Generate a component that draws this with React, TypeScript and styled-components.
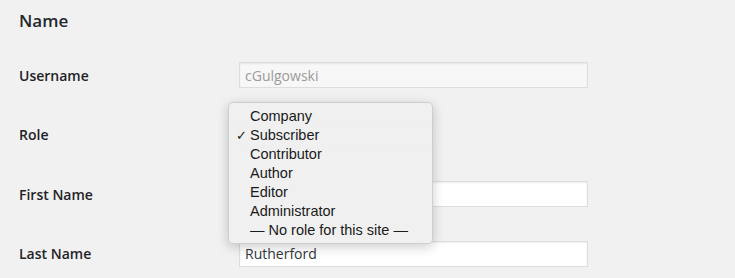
import React from "react";
import styled, { createGlobalStyle } from "styled-components";

const Global = createGlobalStyle`
  html, body { margin: 0; padding: 0; background: #f1f1f1; }
  * { box-sizing: border-box; }
`;

const Page = styled.div`
  width: 735px;
  height: 278px;
  overflow: hidden;
  background: #f1f1f1;
  padding-left: 19px;
  font-family: "Open Sans", "Liberation Sans", sans-serif;
  color: #23282d;
`;

const Heading = styled.h2`
  margin: 0;
  height: 45.5px;
  padding-top: 10px;
  font-size: 17px;
  line-height: 22px;
  font-weight: 600;
  color: #23282d;
`;

const Row = styled.div`
  display: grid;
  grid-template-columns: 220px 1fr;
  align-items: center;
  height: 59.5px;
`;

const Label = styled.label`
  font-size: 14px;
  font-weight: 600;
  color: #1f2328;
`;

const Input = styled.input<{ $disabled?: boolean }>`
  width: 349px;
  height: 26px;
  padding: 0 5px;
  border: 1px solid #ddd;
  box-shadow: inset 0 1px 2px rgba(0, 0, 0, 0.07);
  background: ${(p) => (p.$disabled ? "#f7f7f7" : "#fff")};
  color: ${(p) => (p.$disabled ? "#9a9a9a" : "#32373c")};
  font-family: "Open Sans", "Liberation Sans", sans-serif;
  font-size: 14px;
  outline: none;
`;

const SelectWrap = styled.div`
  position: relative;
  width: 194px;
  height: 26px;
  border: 1px solid #a9c4d8;
  border-radius: 3px;
  background: #fff;
`;

const Popup = styled.ul`
  position: absolute;
  left: -12px;
  top: -21px;
  width: 205px;
  height: 142px;
  margin: 0;
  padding: 4px 0 0 0;
  list-style: none;
  background: rgba(240, 240, 240, 0.98);
  border: 1px solid rgba(0, 0, 0, 0.14);
  border-radius: 5px;
  box-shadow: 0 3px 12px rgba(0, 0, 0, 0.2);
  font-family: "Liberation Sans", Arial, sans-serif;
  font-size: 14.5px;
  color: #1a1a1a;
  z-index: 2;
`;

const Item = styled.li`
  position: relative;
  height: 19px;
  line-height: 19px;
  padding-left: 21px;
  white-space: nowrap;
`;

const Check = styled.span`
  position: absolute;
  left: 7px;
  top: 0;
  font-family: "DejaVu Sans", sans-serif;
  font-size: 13px;
  font-weight: bold;
`;

const roles = [
  "Company",
  "Subscriber",
  "Contributor",
  "Author",
  "Editor",
  "Administrator",
  "— No role for this site —",
];

export default function App() {
  return (
    <>
      <Global />
      <Page>
        <Heading>Name</Heading>
        <Row>
          <Label>Username</Label>
          <Input $disabled disabled value="cGulgowski" readOnly />
        </Row>
        <Row>
          <Label>Role</Label>
          <SelectWrap>
            <Popup>
              {roles.map((r) => (
                <Item key={r}>
                  {r === "Subscriber" && <Check>✓</Check>}
                  {r}
                </Item>
              ))}
            </Popup>
          </SelectWrap>
        </Row>
        <Row>
          <Label>First Name</Label>
          <Input value="" readOnly />
        </Row>
        <Row>
          <Label>Last Name</Label>
          <Input value="Rutherford" readOnly />
        </Row>
      </Page>
    </>
  );
}
